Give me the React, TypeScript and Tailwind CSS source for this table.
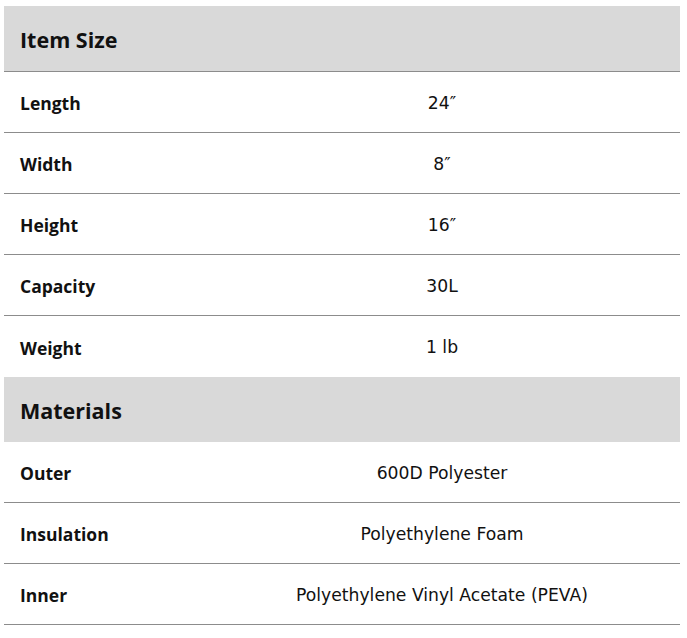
import React from "react";

const sections: { title: string; rows: [string, string][] }[] = [
  {
    title: "Item Size",
    rows: [
      ["Length", "24″"],
      ["Width", "8″"],
      ["Height", "16″"],
      ["Capacity", "30L"],
      ["Weight", "1 lb"],
    ],
  },
  {
    title: "Materials",
    rows: [
      ["Outer", "600D Polyester"],
      ["Insulation", "Polyethylene Foam"],
      ["Inner", "Polyethylene Vinyl Acetate (PEVA)"],
    ],
  },
];

export default function App() {
  return (
    <div
      className="w-[687px] h-[638px] bg-white pt-[6px] pl-[4px]"
      style={{ fontFamily: '"Open Sans", "Liberation Sans", Arial, sans-serif' }}
    >
      <div className="w-[676px] flex flex-col text-[#111]">
        {sections.map((s, si) => (
          <div key={s.title} className="flex flex-col">
            <div
              className={
                "bg-[#d9d9d9] flex items-center pl-[16px] text-[21.5px] font-bold leading-none " +
                (si === 0 ? "border-b border-[#8c8c8c] h-[66px]" : "h-[65px]")
              }
            >
              <span className="pt-[2px]">{s.title}</span>
            </div>
            {s.rows.map(([k, v], ri) => {
              const last = ri === s.rows.length - 1;
              const border = !(si === 0 && last);
              return (
                <div
                  key={k}
                  className={
                    "flex items-center h-[61px] leading-none " +
                    (border ? "border-b border-[#8c8c8c]" : "")
                  }
                >
                  <div className="w-[200px] pl-[16px] text-[17.5px] font-bold pt-[4px]">{k}</div>
                  <div className="flex-1 text-center text-[17.2px] pt-[3px] font-['DejaVu_Sans',sans-serif]">
                    {v}
                  </div>
                </div>
              );
            })}
          </div>
        ))}
      </div>
    </div>
  );
}
